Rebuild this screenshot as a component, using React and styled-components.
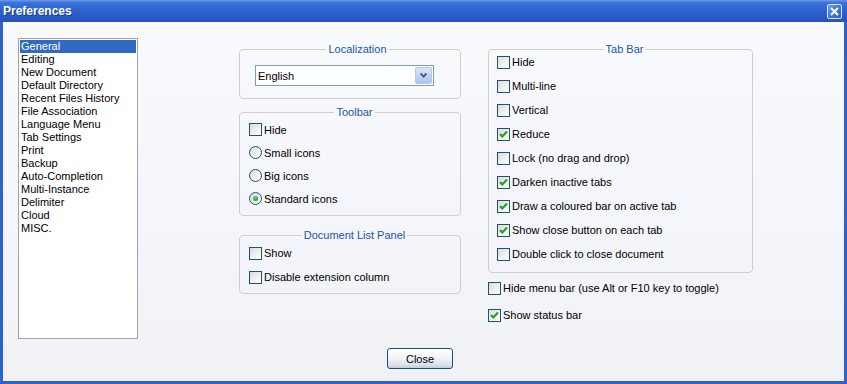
import React from 'react'
import styled, { createGlobalStyle } from 'styled-components'

const GlobalStyle = createGlobalStyle`
  html, body {
    margin: 0;
    padding: 0;
    background: #ffffff;
  }
  body {
    font-family: "Liberation Sans", Arial, sans-serif;
    font-size: 11px;
    color: #000000;
  }
`

const Window = styled.div`
  width: 847px;
  height: 384px;
  display: flex;
  flex-direction: column;
  overflow: hidden;
`

const TitleBar = styled.div`
  height: 22px;
  flex: none;
  display: flex;
  align-items: center;
  justify-content: space-between;
  padding: 0 5px 0 3px;
  background: linear-gradient(180deg, #6c9ae8 0%, #3a72da 12%, #2d63cf 45%, #2858c5 80%, #2350bb 100%);
`

const Title = styled.span`
  color: #ffffff;
  font-weight: bold;
  font-size: 12px;
  text-shadow: 1px 1px 0 #1a3e8c;
`

const CloseBox = styled.div`
  width: 13px;
  height: 13px;
  border: 1px solid #dfe8f8;
  border-radius: 2px;
  background: linear-gradient(135deg, #6b9cef 0%, #3e76dc 50%, #2b5fc8 100%);
  display: flex;
  align-items: center;
  justify-content: center;
  margin-top: 1px;
`

const Frame = styled.div`
  flex: 1;
  display: flex;
  border: 3px solid #2f60cb;
  border-top: none;
  box-shadow: inset 1px 0 0 #5a8ae2, inset -1px 0 0 #5a8ae2, inset 0 -1px 0 #5a8ae2;
`

const Body = styled.div`
  flex: 1;
  display: flex;
  flex-direction: column;
  padding: 16px 0 12px 15px;
  background: linear-gradient(180deg, #f9fafe 0%, #f4f5fa 60%, #f1f2f6 100%);
`

const Main = styled.div`
  display: flex;
  align-items: flex-start;
`

const ListBox = styled.div`
  width: 120px;
  height: 301px;
  box-sizing: border-box;
  border: 1px solid #a3a3a3;
  background: #ffffff;
  padding: 1px 1px 0 1px;
  flex: none;
`

const ListItem = styled.div`
  height: 13px;
  line-height: 13px;
  padding-left: 1px;
  white-space: nowrap;
  background: ${p => (p.$selected ? '#316ac5' : 'transparent')};
  color: ${p => (p.$selected ? '#ffffff' : '#000000')};
`

const Column = styled.div`
  width: ${p => p.$width}px;
  margin-left: ${p => p.$left}px;
  margin-top: 5px;
  display: flex;
  flex-direction: column;
  flex: none;
`

const Group = styled.fieldset`
  margin: ${p => p.$top || 0}px 0 0 0;
  padding: 0 0 ${p => p.$padBottom}px ${p => p.$padLeft}px;
  border: 1px solid #d0d0c8;
  border-radius: 4px;
  min-width: 0;
`

const Legend = styled.legend`
  margin: 0 auto;
  padding: 0 2px;
  line-height: 12px;
  font-size: 11px;
  color: #2254a8;
`

const Options = styled.div`
  display: flex;
  flex-direction: column;
  margin-top: ${p => p.$shift || 0}px;
  gap: ${p => p.$gap || 0}px;
`

const Row = styled.label`
  height: ${p => p.$h}px;
  display: flex;
  align-items: center;
  gap: 2px;
  white-space: nowrap;
`

const Box = styled.span`
  width: 13px;
  height: 13px;
  box-sizing: border-box;
  border: 1px solid #1c5180;
  background: linear-gradient(135deg, #dcdcd5 0%, #f0f0ec 55%, #ffffff 100%);
  display: flex;
  align-items: center;
  justify-content: center;
  flex: none;
`

const RadioRing = styled.span`
  width: 13px;
  height: 13px;
  box-sizing: border-box;
  border: 1px solid #1c5180;
  border-radius: 50%;
  background: linear-gradient(135deg, #dcdcd5 0%, #f0f0ec 55%, #ffffff 100%);
  display: flex;
  align-items: center;
  justify-content: center;
  flex: none;
`

const RadioDot = styled.span`
  width: 5px;
  height: 5px;
  border-radius: 50%;
  background: radial-gradient(circle at 40% 40%, #5ee05e 0%, #21a121 70%, #1a8a1a 100%);
`

const Combo = styled.div`
  width: 179px;
  height: 21px;
  box-sizing: border-box;
  border: 1px solid #7f9db9;
  background: #ffffff;
  display: flex;
  align-items: center;
  justify-content: space-between;
  padding: 1px 1px 1px 2px;
`

const ComboButton = styled.span`
  width: 17px;
  height: 17px;
  box-sizing: border-box;
  border: 1px solid #b5c7ec;
  border-radius: 2px;
  background: linear-gradient(180deg, #dbe6fd 0%, #c3d4f9 50%, #b0c4f0 100%);
  display: flex;
  align-items: center;
  justify-content: center;
`

const Footer = styled.div`
  display: flex;
  justify-content: center;
  margin-top: 9px;
  padding-right: 22px;
`

const Button = styled.button`
  width: 66px;
  height: 21px;
  border: 1px solid #1d4d86;
  border-radius: 3px;
  background: linear-gradient(180deg, #ffffff 0%, #f3f4f8 45%, #dfe3ec 80%, #c5cddd 100%);
  font-family: "Liberation Sans", Arial, sans-serif;
  font-size: 11px;
  color: #000000;
  padding: 0;
`

const Check = ({ checked }) => (
  <Box>
    {checked && (
      <svg width="11" height="11" viewBox="0 0 11 11">
        <polyline points="2,5 4.3,7.5 9,2.6" fill="none" stroke="#21a121" strokeWidth="2.2" />
      </svg>
    )}
  </Box>
)

const CheckRow = ({ label, checked, h = 24 }) => (
  <Row $h={h}>
    <Check checked={checked} />
    <span>{label}</span>
  </Row>
)

const RadioRow = ({ label, selected, h = 23 }) => (
  <Row $h={h}>
    <RadioRing>{selected && <RadioDot />}</RadioRing>
    <span>{label}</span>
  </Row>
)

const pages = [
  'General', 'Editing', 'New Document', 'Default Directory', 'Recent Files History',
  'File Association', 'Language Menu', 'Tab Settings', 'Print', 'Backup',
  'Auto-Completion', 'Multi-Instance', 'Delimiter', 'Cloud', 'MISC.',
]

const tabBar = [
  ['Hide', false], ['Multi-line', false], ['Vertical', false], ['Reduce', true],
  ['Lock (no drag and drop)', false], ['Darken inactive tabs', true],
  ['Draw a coloured bar on active tab', true], ['Show close button on each tab', true],
  ['Double click to close document', false],
]

export default function App() {
  return (
    <Window>
      <GlobalStyle />
      <TitleBar>
        <Title>Preferences</Title>
        <CloseBox>
          <svg width="9" height="9" viewBox="0 0 9 9">
            <path d="M1 1 L8 8 M8 1 L1 8" stroke="#ffffff" strokeWidth="2" />
          </svg>
        </CloseBox>
      </TitleBar>
      <Frame>
        <Body>
          <Main>
            <ListBox>
              {pages.map((p, i) => (
                <ListItem key={p} $selected={i === 0}>{p}</ListItem>
              ))}
            </ListBox>

            <Column $width={222} $left={101}>
              <Group $padLeft={15} $padBottom={12}>
                <Legend>Localization</Legend>
                <Options $shift={10}>
                  <Combo>
                    <span>English</span>
                    <ComboButton>
                      <svg width="9" height="7" viewBox="0 0 9 7">
                        <polyline points="1.5,1.5 4.5,4.5 7.5,1.5" fill="none" stroke="#4d6185" strokeWidth="2" />
                      </svg>
                    </ComboButton>
                  </Combo>
                </Options>
              </Group>

              <Group $top={7} $padLeft={9} $padBottom={5}>
                <Legend>Toolbar</Legend>
                <Options>
                  <CheckRow label="Hide" h={23} />
                  <RadioRow label="Small icons" />
                  <RadioRow label="Big icons" />
                  <RadioRow label="Standard icons" selected />
                </Options>
              </Group>

              <Group $top={13} $padLeft={9} $padBottom={4}>
                <Legend>Document List Panel</Legend>
                <Options>
                  <CheckRow label="Show" />
                  <CheckRow label="Disable extension column" />
                </Options>
              </Group>
            </Column>

            <Column $width={265} $left={27}>
              <Group $padLeft={8} $padBottom={6}>
                <Legend>Tab Bar</Legend>
                <Options $shift={-5}>
                  {tabBar.map(([label, checked]) => (
                    <CheckRow key={label} label={label} checked={checked} />
                  ))}
                </Options>
              </Group>
              <Options $shift={3} $gap={3}>
                <CheckRow label="Hide menu bar (use Alt or F10 key to toggle)" />
                <CheckRow label="Show status bar" checked />
              </Options>
            </Column>
          </Main>
          <Footer>
            <Button>Close</Button>
          </Footer>
        </Body>
      </Frame>
    </Window>
  )
}
